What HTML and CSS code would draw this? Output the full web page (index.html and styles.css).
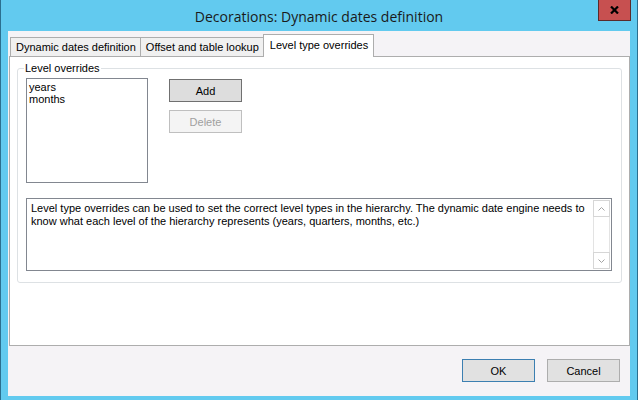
FILE: index.html
```html
<!DOCTYPE html>
<html lang="en">

<head>
    <meta charset="UTF-8">
    <title>Decorations: Dynamic dates definition</title>
    <link rel="stylesheet" href="styles.css">
</head>

<body>
    <div class="window">
        <!-- title bar -->
        <div class="titlebar">
            <span class="title">Decorations: Dynamic dates definition</span>
            <div class="close">
                <svg width="9" height="8" viewBox="0 0 9 8">
                    <path d="M1 0.5 L8 7.5 M8 0.5 L1 7.5" stroke="#000" stroke-width="2.2" fill="none" />
                </svg>
            </div>
        </div>

        <div class="client">
            <div class="tabs">
                <div class="tab">Dynamic dates definition</div>
                <div class="tab">Offset and table lookup</div>
                <div class="tab active">Level type overrides</div>
            </div>

            <div class="panel">
                <fieldset class="group">
                    <legend>Level overrides</legend>
                    <div class="top-row">
                        <div class="listbox">
                            <div class="item">years</div>
                            <div class="item">months</div>
                        </div>
                        <div class="side-buttons">
                            <div class="btn">Add</div>
                            <div class="btn disabled">Delete</div>
                        </div>
                    </div>
                    <div class="memo">
                        <div class="memo-text">Level type overrides can be used to set the correct level types in the hierarchy. The dynamic date engine needs to know what each level of the hierarchy represents (years, quarters, months, etc.)</div>
                        <div class="scrollbar">
                            <div class="arrow">
                                <svg width="7" height="4" viewBox="0 0 7 4">
                                    <path d="M0.5 3.5 L3.5 0.5 L6.5 3.5" stroke="#a3a3a3" fill="none" />
                                </svg>
                            </div>
                            <div class="track"></div>
                            <div class="arrow">
                                <svg width="7" height="4" viewBox="0 0 7 4">
                                    <path d="M0.5 0.5 L3.5 3.5 L6.5 0.5" stroke="#a3a3a3" fill="none" />
                                </svg>
                            </div>
                        </div>
                    </div>
                </fieldset>
            </div>

            <div class="footer">
                <div class="btn default">OK</div>
                <div class="btn">Cancel</div>
            </div>
        </div>
    </div>
</body>

</html>
```

FILE: styles.css
```css
body {
    margin: 0;
    background: #1d4f6b;
    font-family: "Liberation Sans", Arial, sans-serif;
    font-size: 11px;
    color: #000;
}

.window {
    width: 638px;
    height: 400px;
    box-sizing: border-box;
    background: #62caef;
    border-left: 1px solid #2b6f8f;
    border-right: 1px solid #2b6f8f;
    display: flex;
    flex-direction: column;
}

/* title bar */
.titlebar {
    height: 31px;
    display: flex;
    justify-content: center;
    align-items: center;
    position: relative;
}

.title {
    font-family: "Open Sans", "Noto Sans", sans-serif;
    font-size: 14px;
    color: #1a1a1a;
    padding-top: 2px;
}

.close {
    position: absolute;
    top: 0;
    right: 6px;
    width: 33px;
    height: 21px;
    box-sizing: border-box;
    background: #c75050;
    border: 1px solid #5a2a2a;
    border-top: none;
    display: flex;
    justify-content: center;
    align-items: center;
}

.client {
    flex: 1;
    margin: 0 7px 4px 7px;
    background: #f5f3f6;
    padding-top: 4px;
    display: flex;
    flex-direction: column;
}

/* tabs */
.tabs {
    display: flex;
    align-items: flex-end;
    margin-left: 2px;
    height: 21px;
    position: relative;
    z-index: 1;
}

.tab {
    height: 19px;
    box-sizing: border-box;
    padding: 0 4px 0 5px;
    line-height: 18px;
    background: #f0f0f0;
    border: 1px solid #adadad;
    border-bottom: none;
}

.tab + .tab {
    border-left: none;
}

.tab.active {
    height: 23px;
    margin-bottom: -1px;
    background: #fff;
    border-left: 1px solid #adadad;
    padding: 0 5px 0 6px;
    margin-left: -1px;
    line-height: 20px;
}

.panel {
    margin-left: 1px;
    height: 290px;
    box-sizing: border-box;
    background: #fff;
    border: 1px solid #adadad;
    padding: 5px 7px 0 7px;
}

/* group box */
.group {
    margin: 0;
    width: 605px;
    height: 221px;
    box-sizing: border-box;
    border: 1px solid #dde1e4;
    border-radius: 3px;
    padding: 3px 8px 0 8px;
}

.group legend {
    padding: 0 1px;
    margin-left: -2px;
    line-height: 13px;
}

.top-row {
    display: flex;
    gap: 21px;
}

.listbox {
    width: 122px;
    height: 105px;
    box-sizing: border-box;
    border: 1px solid #828790;
    padding: 2px 2px;
}

.item {
    line-height: 12px;
}

.side-buttons {
    display: flex;
    flex-direction: column;
    gap: 8px;
    padding-top: 1px;
}

.btn {
    width: 73px;
    height: 23px;
    box-sizing: border-box;
    border: 1px solid #707070;
    background: #dddddd;
    display: flex;
    justify-content: center;
    align-items: center;
}

.btn.disabled {
    background: #f4f4f4;
    border-color: #bfbfbf;
    color: #a0a0a0;
}

/* description box */
.memo {
    margin-top: 15px;
    width: 586px;
    height: 73px;
    box-sizing: border-box;
    border: 1px solid #828790;
    display: flex;
}

.memo-text {
    flex: 1;
    padding: 3px 8px 0 4px;
    line-height: 13px;
}

.scrollbar {
    width: 17px;
    display: flex;
    flex-direction: column;
    padding: 1px 1px 1px 0;
}

.arrow {
    height: 17px;
    box-sizing: border-box;
    border: 1px solid #d6d6d6;
    display: flex;
    justify-content: center;
    align-items: center;
}

.track {
    flex: 1;
    border-left: 1px solid #e3e3e3;
    border-right: 1px solid #e3e3e3;
}

/* dialog buttons */
.footer {
    display: flex;
    justify-content: flex-end;
    gap: 12px;
    padding: 13px 10px 0 0;
}

.footer .btn {
    background: #e1e1e1;
    border-color: #adadad;
}

.footer .btn.default {
    border-color: #3c7fb1;
}
```
